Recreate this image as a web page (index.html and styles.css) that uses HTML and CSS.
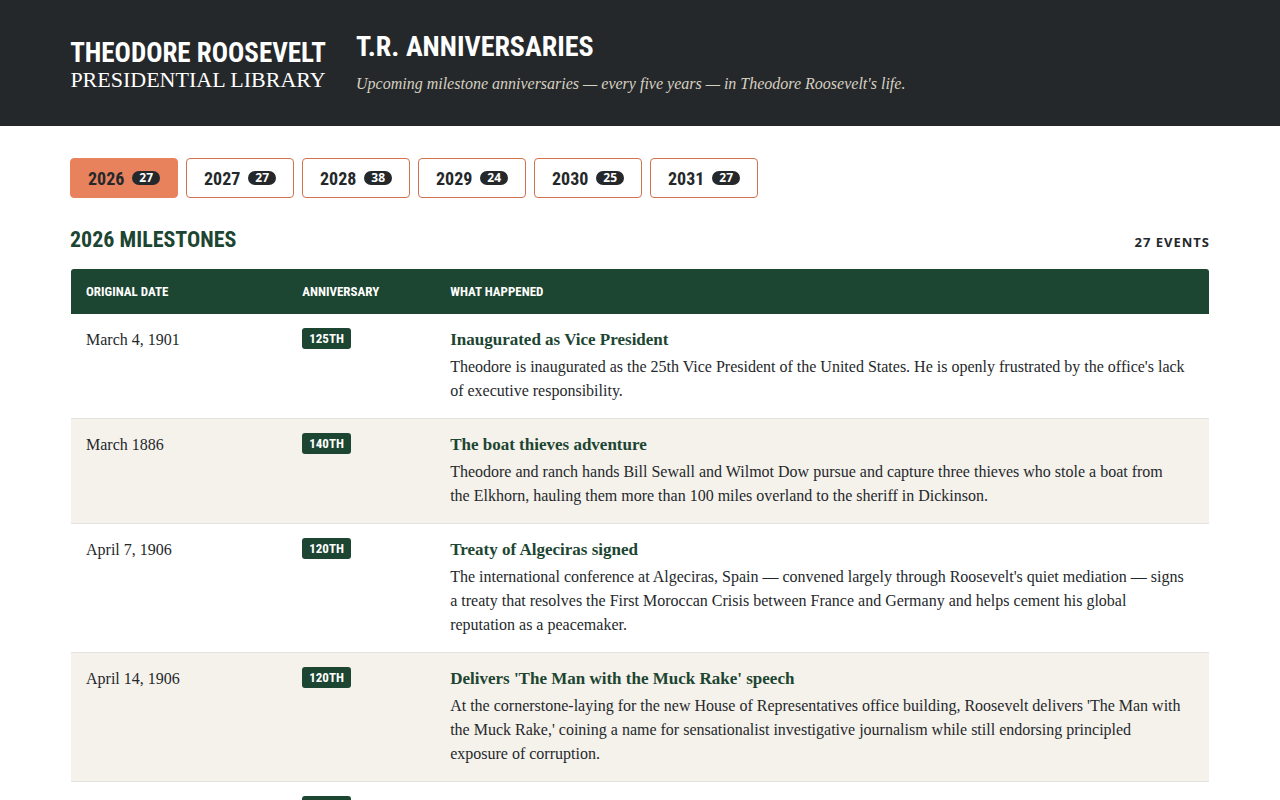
FILE: index.html
```
<!DOCTYPE html>
<html lang="en">
<head>
    <meta charset="UTF-8">
    <meta name="viewport" content="width=device-width, initial-scale=1.0">
    <title>T.R. Anniversaries</title>
    <link rel="stylesheet" href="styles.css">
</head>
<body>
    <header class="site-header">
        <div class="wrap header-inner">
            <a class="logo" href="#">
                <span class="logo-name">THEODORE ROOSEVELT</span>
                <span class="logo-sub">PRESIDENTIAL LIBRARY</span>
            </a>
            <div class="header-text">
                <h1>T.R. ANNIVERSARIES</h1>
                <p>Upcoming milestone anniversaries — every five years — in Theodore Roosevelt's life.</p>
            </div>
        </div>
    </header>

    <main class="wrap">
        <nav class="year-tabs" aria-label="Years">
            <button class="year-tab active" type="button">2026 <span class="count">27</span></button>
            <button class="year-tab" type="button">2027 <span class="count">27</span></button>
            <button class="year-tab" type="button">2028 <span class="count">38</span></button>
            <button class="year-tab" type="button">2029 <span class="count">24</span></button>
            <button class="year-tab" type="button">2030 <span class="count">25</span></button>
            <button class="year-tab" type="button">2031 <span class="count">27</span></button>
        </nav>

        <div class="section-head">
            <h2>2026 MILESTONES</h2>
            <span class="total">27 EVENTS</span>
        </div>

        <table class="events">
            <thead>
                <tr>
                    <th class="col-date" scope="col">ORIGINAL DATE</th>
                    <th class="col-anniv" scope="col">ANNIVERSARY</th>
                    <th scope="col">WHAT HAPPENED</th>
                </tr>
            </thead>
            <tbody>
                <tr>
                    <td>March 4, 1901</td>
                    <td><span class="badge">125TH</span></td>
                    <td>
                        <h3>Inaugurated as Vice President</h3>
                        <p>Theodore is inaugurated as the 25th Vice President of the United States. He is openly frustrated by the office's lack of executive responsibility.</p>
                    </td>
                </tr>
                <tr>
                    <td>March 1886</td>
                    <td><span class="badge">140TH</span></td>
                    <td>
                        <h3>The boat thieves adventure</h3>
                        <p>Theodore and ranch hands Bill Sewall and Wilmot Dow pursue and capture three thieves who stole a boat from the Elkhorn, hauling them more than 100 miles overland to the sheriff in Dickinson.</p>
                    </td>
                </tr>
                <tr>
                    <td>April 7, 1906</td>
                    <td><span class="badge">120TH</span></td>
                    <td>
                        <h3>Treaty of Algeciras signed</h3>
                        <p>The international conference at Algeciras, Spain — convened largely through Roosevelt's quiet mediation — signs a treaty that resolves the First Moroccan Crisis between France and Germany and helps cement his global reputation as a peacemaker.</p>
                    </td>
                </tr>
                <tr>
                    <td>April 14, 1906</td>
                    <td><span class="badge">120TH</span></td>
                    <td>
                        <h3>Delivers 'The Man with the Muck Rake' speech</h3>
                        <p>At the cornerstone-laying for the new House of Representatives office building, Roosevelt delivers 'The Man with the Muck Rake,' coining a name for sensationalist investigative journalism while still endorsing principled exposure of corruption.</p>
                    </td>
                </tr>
                <tr>
                    <td></td>
                    <td><span class="badge">120TH</span></td>
                    <td></td>
                </tr>
            </tbody>
        </table>
    </main>
</body>
</html>
```
FILE: styles.css
```
* {
    box-sizing: border-box;
}

body {
    margin: 0;
    font-family: "Liberation Serif", serif;
    font-size: 16px;
    line-height: 24px;
    color: #25282b;
    background-color: #fff;
}

h1, h2, h3, p {
    margin: 0;
}

.wrap {
    max-width: 1180px;
    margin: 0 auto;
    padding: 0 20px;
}

/* header */
.site-header {
    background-color: #25282b;
    color: #fff;
    padding: 24px 0 28px;
}

.header-inner {
    display: flex;
    align-items: center;
    gap: 30px;
}

.logo {
    display: flex;
    flex-direction: column;
    align-items: center;
    width: 256px;
    padding-top: 8px;
    color: #fff;
    text-decoration: none;
    white-space: nowrap;
}

.logo-name {
    font-family: "Roboto Condensed", "Liberation Sans Narrow", sans-serif;
    font-size: 27px;
    line-height: 30px;
    font-weight: bold;
}

.logo-sub {
    font-size: 22px;
    line-height: 24px;
}

h1, h2, th, .year-tab, .badge {
    font-family: "Roboto Condensed", "Liberation Sans Narrow", sans-serif;
    font-weight: bold;
}

h1 {
    font-size: 28px;
    line-height: 46px;
}

.header-text p {
    font-style: italic;
    font-size: 16px;
    line-height: 28px;
    color: #d6d0c0;
}

/* year buttons */
.year-tabs {
    display: flex;
    flex-wrap: wrap;
    gap: 8px;
    padding-top: 32px;
}

.year-tab {
    display: flex;
    align-items: center;
    justify-content: center;
    gap: 8px;
    min-width: 108px;
    height: 40px;
    padding: 0 16px;
    border: 1px solid #d2724f;
    border-radius: 4px;
    background-color: #fff;
    color: #25282b;
    font-size: 18px;
    cursor: pointer;
}

.year-tab.active {
    background-color: #e8825d;
    border-color: #e8825d;
}

.count {
    padding: 0 7px;
    border-radius: 999px;
    background-color: #25282b;
    color: #fff;
    font-family: "Noto Sans", sans-serif;
    font-size: 12px;
    line-height: 14px;
}

.section-head {
    display: flex;
    justify-content: space-between;
    align-items: baseline;
    padding: 22px 0 9px;
}

h2 {
    font-size: 22px;
    line-height: 40px;
    color: #1c4532;
}

.total {
    font-family: "Noto Sans", sans-serif;
    font-size: 13px;
    font-weight: bold;
    letter-spacing: 1px;
}

/* table */
.events {
    width: 100%;
    border-collapse: separate;
    border-spacing: 0;
    padding: 0 1px;
    table-layout: fixed;
}

.col-date {
    width: 19%;
}

.col-anniv {
    width: 13%;
}

th {
    padding: 0 15px;
    height: 45px;
    background-color: #1c4532;
    color: #fff;
    font-size: 13px;
    text-align: left;
}

th:first-child {
    border-top-left-radius: 3px;
}

th:last-child {
    border-top-right-radius: 3px;
}

td {
    padding: 14px 15px 15px;
    border-bottom: 1px solid #e5e3df;
    vertical-align: top;
}

td:last-child {
    padding-right: 23px;
}

tbody tr:nth-child(even) td {
    background-color: #f5f2eb;
}

td h3 {
    margin-bottom: 3px;
    font-size: 17px;
    line-height: 24px;
    color: #1c4532;
}

.badge {
    display: inline-block;
    padding: 0 7px;
    border-radius: 3px;
    background-color: #1c4532;
    color: #fff;
    font-size: 13px;
    line-height: 21px;
    vertical-align: top;
}
```
